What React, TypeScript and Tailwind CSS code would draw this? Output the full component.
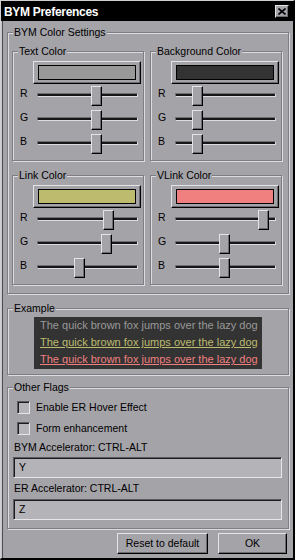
import React from "react";

type ColorGroupData = {
  label: string;
  swatch: string;
  values: [number, number, number];
};

const colorGroups: ColorGroupData[] = [
  { label: "Text Color", swatch: "#999999", values: [153, 153, 153] },
  { label: "Background Color", swatch: "#333333", values: [48, 48, 48] },
  { label: "Link Color", swatch: "#bdbb6d", values: [186, 181, 106] },
  { label: "VLink Color", swatch: "#f08080", values: [236, 125, 125] },
];

const raised =
  "border border-t-[#e4e4e8] border-l-[#e4e4e8] border-b-black border-r-black shadow-[inset_-1px_-1px_0_#6c6c70]";
const sunken =
  "border border-t-[#5c5c60] border-l-[#5c5c60] border-b-[#e6e6ea] border-r-[#e6e6ea] shadow-[inset_1px_1px_0_#1c1c1c]";

function Etched({
  label,
  className = "",
  children,
}: {
  label: string;
  className?: string;
  children?: React.ReactNode;
}) {
  return (
    <div
      className={`relative border border-[#7e7d83] shadow-[inset_1px_1px_0_#dcdce0,1px_1px_0_#dcdce0] ${className}`}
    >
      <span className="absolute left-[5px] -top-[7px] bg-[#a4a3a8] px-[1px] text-[10.5px] leading-[13px] text-black whitespace-nowrap">
        {label}
      </span>
      {children}
    </div>
  );
}

function Slider({ value }: { value: number }) {
  const left = Math.round((value / 255) * 90);
  return (
    <div className="relative w-[101px] h-[24px]">
      <div className="absolute left-0 right-0 top-[9px] h-[4px] bg-[#161616] border border-t-[#707074] border-l-[#707074] border-b-[#dcdce0] border-r-[#dcdce0]" />
      <div
        className={`absolute top-[2px] w-[11px] h-[20px] bg-[#a4a3a8] ${raised}`}
        style={{ left }}
      />
    </div>
  );
}

function ColorGroup({ g }: { g: ColorGroupData }) {
  return (
    <Etched label={g.label} className="w-[132px] h-[110px]">
      <div
        className={`ml-[20px] mt-[9px] w-[108px] h-[23px] flex items-center justify-center ${raised}`}
      >
        <div
          className="w-[98px] h-[15px] border border-black"
          style={{ backgroundColor: g.swatch }}
        />
      </div>
      <div className="flex flex-col">
        {(["R", "G", "B"] as const).map((c, i) => (
          <div key={c} className="flex h-[24px] pl-[7px]">
            <span className="w-[17px] mt-[3px] text-[10.5px] leading-[12px] text-black">
              {c}
            </span>
            <Slider value={g.values[i]} />
          </div>
        ))}
      </div>
    </Etched>
  );
}

function Checkbox() {
  return <div className={`w-[13px] h-[13px] shrink-0 bg-[#b5b4b9] ${sunken}`} />;
}

function Input({ value, className = "" }: { value: string; className?: string }) {
  return (
    <div
      className={`w-[269px] h-[21px] bg-[#b4b3b8] flex items-center pl-[5px] text-[10.5px] text-black ${sunken} ${className}`}
    >
      {value}
    </div>
  );
}

export default function App() {
  return (
    <div className="w-[295px] h-[560px] bg-[#a4a3a8] border-t border-l border-t-[#d0d0d4] border-l-[#d0d0d4] border-r-2 border-b-2 border-r-black border-b-black flex flex-col font-['Liberation_Sans',Arial,sans-serif] text-black">
      {/* Title bar */}
      <div className="h-[20px] bg-black flex items-start justify-between pl-[3px] pr-[4px] shrink-0">
        <span className="mt-[4px] text-[12px] leading-[14px] font-bold tracking-[-0.3px] text-white">
          BYM Preferences
        </span>
        <div
          className={`mt-[4px] w-[14px] h-[13px] bg-[#a4a3a8] flex items-center justify-center ${raised}`}
        >
          <svg width="8" height="7" viewBox="0 0 8 7">
            <path d="M0.5 0.5 L7.5 6.5 M7.5 0.5 L0.5 6.5" stroke="black" strokeWidth="1.6" />
          </svg>
        </div>
      </div>

      {/* Body */}
      <div className="flex-1 flex flex-col pl-[6px] pr-[4px] pt-[11px] shadow-[inset_1px_0_0_#c8c8cc,inset_2px_0_0_#4c4c50]">
        <Etched label="BYM Color Settings" className="h-[262px]">
          <div className="grid grid-cols-[132px_132px] gap-x-[6px] gap-y-[14px] pl-[4px] pt-[18px]">
            {colorGroups.map((g) => (
              <ColorGroup key={g.label} g={g} />
            ))}
          </div>
        </Etched>

        <Etched label="Example" className="mt-[14px] h-[67px]">
          <div className="mx-auto mt-[8px] w-[228px] h-[52px] bg-[#333333] pl-[6px] text-[11px] leading-[17px] whitespace-nowrap">
            <div className="text-[#999999]">The quick brown fox jumps over the lazy dog</div>
            <div className="text-[#bdbb6d] underline">The quick brown fox jumps over the lazy dog</div>
            <div className="text-[#f08080] underline">The quick brown fox jumps over the lazy dog</div>
          </div>
        </Etched>

        <Etched label="Other Flags" className="mt-[12px] h-[142px]">
          <div className="pt-[13px] pl-[9px] flex flex-col">
            <div className="flex items-center h-[13px]">
              <Checkbox />
              <span className="ml-[6px] text-[10.5px] leading-[13px]">Enable ER Hover Effect</span>
            </div>
            <div className="flex items-center h-[13px] mt-[8px]">
              <Checkbox />
              <span className="ml-[6px] text-[10.5px] leading-[13px]">Form enhancement</span>
            </div>
          </div>
          <div className="pl-[5px] flex flex-col">
            <div className="mt-[5px] pl-[1px] text-[10.5px] leading-[14px]">BYM Accelerator: CTRL-ALT</div>
            <Input value="Y" className="mt-[3px]" />
            <div className="mt-[3px] pl-[1px] text-[10.5px] leading-[14px]">ER Accelerator: CTRL-ALT</div>
            <Input value="Z" className="mt-[4px]" />
          </div>
        </Etched>

        <div className="flex justify-end gap-[10px] mt-[4px] mr-[2px]">
          <div
            className={`w-[91px] h-[21px] flex items-center justify-center text-[10.5px] ${raised}`}
          >
            Reset to default
          </div>
          <div
            className={`w-[69px] h-[21px] flex items-center justify-center text-[10.5px] ${raised}`}
          >
            OK
          </div>
        </div>
      </div>
    </div>
  );
}
